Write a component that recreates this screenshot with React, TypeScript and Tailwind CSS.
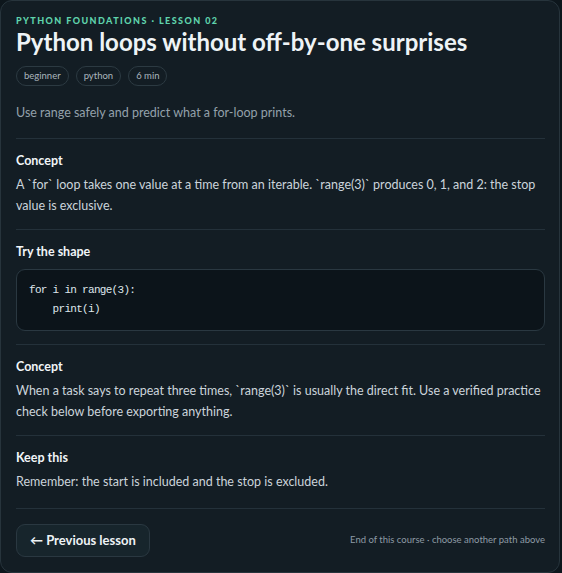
import React from "react";

const tags = ["beginner", "python", "6 min"];

interface Section {
  title: string;
  body?: string;
  code?: string[];
}

const sections: Section[] = [
  {
    title: "Concept",
    body: "A `for` loop takes one value at a time from an iterable. `range(3)` produces 0, 1, and 2: the stop value is exclusive.",
  },
  { title: "Try the shape", code: ["for i in range(3):", "    print(i)"] },
  {
    title: "Concept",
    body: "When a task says to repeat three times, `range(3)` is usually the direct fit. Use a verified practice check below before exporting anything.",
  },
  { title: "Keep this", body: "Remember: the start is included and the stop is excluded." },
];

export default function App() {
  return (
    <div className="min-h-[573px] w-[562px] bg-[#0d161c] font-['Lato','Noto_Sans',sans-serif]">
      <div className="w-[560px] rounded-[12px] border border-[#27343c] bg-[#131d24] pt-[14px] pr-[14px] pb-[15px] pl-[15px]">
        <div className="text-[9px] font-black uppercase leading-[12px] tracking-[0.16em] text-[#5fd3ac]">
          Python Foundations · Lesson 02
        </div>
        <h1 className="mt-[1px] text-[24px] font-bold leading-[28px] text-[#eef3f6]">
          Python loops without off-by-one surprises
        </h1>
        <div className="mt-[10px] flex gap-[7px]">
          {tags.map((t) => (
            <span
              key={t}
              className="flex h-[20px] items-center rounded-full border border-[#2c3a42] px-[7px] text-[9.5px] text-[#aab5bd]"
            >
              {t}
            </span>
          ))}
        </div>
        <p className="mt-[17px] text-[12.5px] leading-[20px] text-[#94a1ab]">
          Use range safely and predict what a for-loop prints.
        </p>

        {sections.map((s, i) => (
          <div
            key={i}
            className={`${i === 0 ? "mt-[15px]" : "mt-[13px]"} border-t border-[#24313a] pt-[12px]`}
          >
            <h2 className="text-[12.5px] font-bold leading-[20px] text-[#f1f5f8]">{s.title}</h2>
            {s.body && (
              <p className="mt-[3px] text-[12.5px] leading-[21px] text-[#cbd4db]">{s.body}</p>
            )}
            {s.code && (
              <pre className="mt-[7px] rounded-[9px] border border-[#2a3841] bg-[#0c141a] px-[12px] py-[11px] font-['Liberation_Mono',monospace] text-[11px] leading-[19px] tracking-[-0.7px] text-[#dfe6eb]">
                {s.code.join("\n")}
              </pre>
            )}
          </div>
        ))}

        <div className="mt-[16px] flex items-center justify-between border-t border-[#24313a] pt-[15px]">
          <button className="h-[33px] rounded-[9px] border border-[#2a3841] bg-[#17252c] px-[13px] text-[13px] font-bold text-[#eef3f6]">
            ← Previous lesson
          </button>
          <span className="text-[9.5px] text-[#8e9ba5]">End of this course · choose another path above</span>
        </div>
      </div>
    </div>
  );
}
